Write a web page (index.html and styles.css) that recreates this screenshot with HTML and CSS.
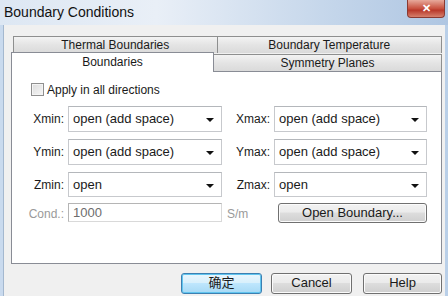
FILE: index.html
```html
<!DOCTYPE html>
<html lang="en">
<head>
    <meta charset="UTF-8">
    <title>Boundary Conditions</title>
    <link rel="stylesheet" href="styles.css">
</head>
<body>
<div class="window">
    <div class="titlebar">
        <span class="title">Boundary Conditions</span>
        <span class="close">&#x2715;</span>
    </div>
    <div class="client">
        <div class="tabs">
            <div class="tab-row back">
                <div class="tab thermal">Thermal Boundaries</div>
                <div class="tab temp">Boundary Temperature</div>
            </div>
            <div class="tab-row front">
                <div class="tab active">Boundaries</div>
                <div class="tab sym">Symmetry Planes</div>
            </div>
        </div>
        <div class="panel">
            <label class="check"><span class="box"></span>Apply in all directions</label>
            <div class="grid">
                <span class="lbl">Xmin:</span>
                <div class="combo">open (add space)<span class="arrow"></span></div>
                <span class="lbl">Xmax:</span>
                <div class="combo">open (add space)<span class="arrow"></span></div>

                <span class="lbl">Ymin:</span>
                <div class="combo">open (add space)<span class="arrow"></span></div>
                <span class="lbl">Ymax:</span>
                <div class="combo">open (add space)<span class="arrow"></span></div>

                <span class="lbl">Zmin:</span>
                <div class="combo">open<span class="arrow"></span></div>
                <span class="lbl">Zmax:</span>
                <div class="combo">open<span class="arrow"></span></div>

                <span class="lbl off">Cond.:</span>
                <div class="field">1000</div>
                <span class="unit">S/m</span>
                <div class="btn open-btn">Open Boundary...</div>
            </div>
        </div>
        <div class="actions">
            <div class="btn default">确定</div>
            <div class="btn">Cancel</div>
            <div class="btn help">Help</div>
        </div>
    </div>
</div>
</body>
</html>
```

FILE: styles.css
```css
html * {
    box-sizing: border-box;
}

body {
    margin: 0;
    font-family: "Liberation Sans", "Noto Sans CJK SC", sans-serif;
    font-size: 12px;
    color: #1a1a1a;
}

.window {
    width: 448px;
    height: 296px;
    overflow: hidden;
    background: linear-gradient(90deg, #c9daee 0%, #d6e3f2 40%, #b9cfe8 100%);
}

.titlebar {
    height: 25px;
    display: flex;
    align-items: flex-start;
    justify-content: space-between;
    background: linear-gradient(90deg, #dde7f3 0%, #e9eff7 35%, #c3d5ea 75%, #afc6e2 100%);
}

.title {
    font-size: 14px;
    padding: 4px 0 0 4px;
    color: #111;
}

.close {
    width: 38px;
    height: 18px;
    margin-right: 3px;
    border: 1px solid #8a3a32;
    border-top: none;
    border-radius: 0 0 4px 4px;
    background: linear-gradient(#e7a99b, #c8513f 50%, #b8382a 60%, #d6806c);
    color: #fff;
    font-size: 11px;
    font-weight: bold;
    text-align: center;
    line-height: 16px;
}

.client {
    margin: 0 3px;
    height: 271px;
    background: #f0f0f0;
    padding: 11px 3px 0 7px;
    border-left: 1px solid #a4b8cf;
}

.tab-row {
    display: flex;
    position: relative;
}

.tab {
    text-align: center;
    border: 1px solid #8e8f8f;
    border-bottom: none;
    background: linear-gradient(#f3f3f3, #e4e4e4 50%, #dadada);
    height: 17px;
    line-height: 16px;
}

.back {
    padding-left: 2px;
}

.thermal {
    width: 205px;
}

.temp {
    width: 225px;
    border-left: none;
}

.front {
    align-items: flex-end;
    height: 18px;
    z-index: 1;
}

.tab.active {
    width: 203px;
    height: 20px;
    margin-bottom: -1px;
    background: #fff;
    line-height: 18px;
    border-color: #898c95;
}

.sym {
    width: 228px;
    height: 17px;
    border-left: none;
}

.panel {
    height: 193px;
    background: #fff;
    border: 1px solid #898c95;
    padding: 11px 0 0 11px;
}

.check {
    display: flex;
    align-items: center;
    margin-left: 8px;
    height: 13px;
}

.box {
    width: 13px;
    height: 13px;
    border: 1px solid #8f8f8f;
    background: linear-gradient(135deg, #dcdcdc, #f6f6f6);
    box-shadow: inset 0 0 0 1px #f4f4f4;
    margin-right: 3px;
}

.grid {
    display: grid;
    grid-template-columns: 41px 154px 44px 153px;
    grid-template-rows: 26px 26px 25px 19px;
    column-gap: 4px;
    row-gap: 7px;
    margin-top: 10px;
    align-items: center;
}

.grid > :nth-child(3),
.grid > :nth-child(7),
.grid > :nth-child(11) {
    margin-left: 3px;
}

.lbl {
    text-align: right;
}

.lbl.off,
.unit {
    color: #9a9a9a;
}

.unit {
    padding-left: 1px;
}

.combo {
    position: relative;
    height: 100%;
    border: 1px solid #c7c9cd;
    border-top-color: #b4b7bb;
    padding-left: 4px;
    line-height: 24px;
    font-size: 13px;
    background: #fff;
}

.arrow {
    position: absolute;
    right: 7px;
    top: 11px;
    border-left: 4px solid transparent;
    border-right: 4px solid transparent;
    border-top: 4px solid #111;
}

.field {
    height: 19px;
    margin-top: -2px;
    border: 1px solid #abadb3;
    border-color: #b5b5b5 #d9d9d9 #d9d9d9 #b5b5b5;
    padding-left: 4px;
    line-height: 17px;
    font-size: 13px;
    color: #6d6d6d;
}

.btn {
    height: 20px;
    border: 1px solid #707070;
    border-radius: 3px;
    background: linear-gradient(#f2f2f2, #ebebeb 45%, #dddddd 50%, #cfcfcf);
    box-shadow: inset 0 0 0 1px #fbfbfb;
    text-align: center;
    line-height: 18px;
    font-size: 13px;
}

.open-btn {
    margin-left: 4px;
    margin-top: -1px;
}

.actions {
    display: flex;
    justify-content: flex-end;
    gap: 9px;
    margin-top: 9px;
}

.actions .btn {
    width: 81px;
    height: 21px;
}

.actions .help {
    width: 79px;
    margin-left: 2px;
}

.btn.default {
    border-color: #3c7fb1;
    background: linear-gradient(#eaf6fd, #d9f0fc 45%, #bee6fd 50%, #a7d9f5);
    box-shadow: inset 0 0 0 1px #61c5ef;
}
```
